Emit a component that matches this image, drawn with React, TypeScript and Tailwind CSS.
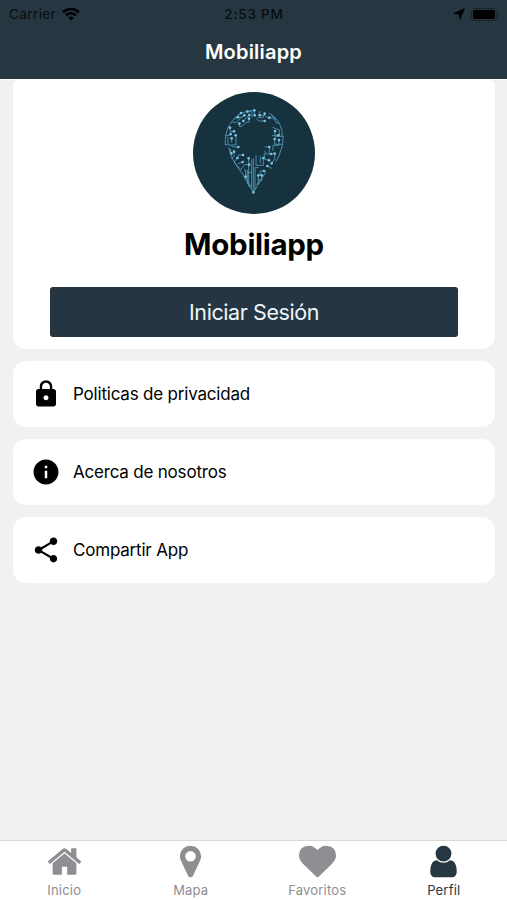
import { MdInfo, MdLock, MdShare } from 'react-icons/md'
import type { IconType } from 'react-icons'

const options: { label: string; icon: IconType }[] = [
  { label: 'Politicas de privacidad', icon: MdLock },
  { label: 'Acerca de nosotros', icon: MdInfo },
  { label: 'Compartir App', icon: MdShare },
]

const tabs = [
  {
    label: 'Inicio',
    path: 'M1472 992v480q0 26-19 45t-45 19h-384v-384h-256v384h-384q-26 0-45-19t-19-45v-480q0-1 .5-3t.5-3l575-474 575 474q1 2 1 6zm223-69l-62 74q-8 9-21 11h-3q-13 0-21-7l-692-577-692 577q-12 8-24 7-13-2-21-11l-62-74q-8-10-7-23.5t11-21.5l719-599q32-26 76-26t76 26l244 204v-195q0-14 9-23t23-9h192q14 0 23 9t9 23v408l219 182q10 8 11 21.5t-7 23.5z',
  },
  {
    label: 'Mapa',
    path: 'M1152 640q0-106-75-181t-181-75-181 75-75 181 75 181 181 75 181-75 75-181zm256 0q0 109-33 179l-364 774q-16 33-47.5 52t-67.5 19-67.5-19-46.5-52l-365-774q-33-70-33-179 0-212 150-362t362-150 362 150 150 362z',
  },
  {
    label: 'Favoritos',
    path: 'M896 1664q-26 0-44-18l-624-602q-10-8-27.5-26t-55.5-65.5-68-97.5-53.5-121-23.5-138q0-220 127-344t351-124q62 0 126.5 21.5t120 58 95.5 68.5 76 68q36-36 76-68t95.5-68.5 120-58 126.5-21.5q224 0 351 124t127 344q0 221-229 450l-623 600q-18 18-44 18z',
  },
  {
    label: 'Perfil',
    active: true,
    path: 'M1536 1399q0 109-62.5 187t-150.5 78h-854q-88 0-150.5-78t-62.5-187q0-85 8.5-160.5t31.5-152 58.5-131 94-89 134.5-34.5q131 128 313 128t313-128q76 0 134.5 34.5t94 89 58.5 131 31.5 152 8.5 160.5zm-256-887q0 159-112.5 271.5t-271.5 112.5-271.5-112.5-112.5-271.5 112.5-271.5 271.5-112.5 271.5 112.5 112.5 271.5z',
  },
]

// circuit nodes of the pin logo
const nodes = [
  [211, 76], [190, 80], [181, 91], [171, 84], [162, 97], [196, 90], [195, 101], [212, 91], [227, 91], [242, 86],
  [242, 108], [256, 98], [178, 108], [166, 116], [138, 128], [150, 139], [140, 147], [143, 160], [155, 151],
  [273, 138], [283, 151], [272, 162], [285, 165], [163, 186], [150, 200], [142, 205], [177, 210], [160, 219],
  [176, 231], [194, 220], [195, 239], [256, 186], [262, 207], [272, 206], [255, 226], [263, 235], [250, 243],
  [238, 219], [223, 271], [233, 271], [185, 275], [240, 258], [208, 322],
]

function Logo() {
  return (
    <svg viewBox="27 21 366 366" className="h-[122px] w-[122px]">
      <circle cx="210" cy="204" r="183" fill="#17323f" />
      <g fill="none" stroke="#4f93b3" strokeWidth="2.8">
        <path d="M137 119Q160 77 211 76M146 112h12l20-21M152 104l19-20M162 97h13l10-10M166 116v8h8l12-12h9V90M178 108l17-18M211 76v15M190 80h14v18M227 78v13M221 98h16l5-12M242 108h-18l-8-8M227 91h13l16 10M254 84q32 16 40 54M256 98l14 2 8 14h8M262 92l15 12" />
        <path d="M138 128v11h12M134 122q-11 24-11 57M123 151h17v-4M132 156v24h24v-29M143 160v12M123 179h7M273 138v16h10v-3M266 127l20 8v19h12M298 154q0 30-13 58l-9 18M272 162v16h22M285 165v16h-18v16M294 140v14M264 152h18" />
        <path d="M134 187q6 35 39 76M163 186h-14l-8-5M150 200v14l-8 6M142 205l-3-14M177 210h-14v9M160 219l-10 12 18 20M176 231l-14 5M194 220v15M195 239h-13l-13 16M256 186h-14M262 207h-16l-4-10M256 186v20M272 206v16l-9 13M255 226l-14-4v-18M250 243l15 8M238 219v22h-22v-30M229 214v20" />
        <path d="M174 263l34 60 38-63M208 322V220M203 310V223M213 315V248h11M194 239v66M185 275v-20h-5M190 255v42M201 263h-10M223 271v28M233 271v18M220 284h14M240 258h-11v13M217 300l10-12M181 276l20 28" />
      </g>
      <g fill="#7cc4e0">
        {nodes.map(([x, y]) => (
          <circle key={`${x}-${y}`} cx={x} cy={y} r="4" />
        ))}
      </g>
    </svg>
  )
}

function StatusBar() {
  return (
    <div className="grid h-7 grid-cols-3 items-center px-[9px] text-[13.5px] leading-none text-[#070d11]">
      <div className="flex items-center gap-[6px]">
        <span className="pt-px tracking-[0.4px]">Carrier</span>
        <svg viewBox="0 0 18 14" className="h-[14px] w-[18px]" fill="none" stroke="#000" strokeWidth="2.6">
          <path d="M1 5.2a11.5 11.5 0 0 1 16 0M4 8.4a7 7 0 0 1 10 0" />
          <path d="M9 13.6L6.2 10.8a4 4 0 0 1 5.6 0z" fill="#000" stroke="none" />
        </svg>
      </div>
      <span className="pl-px pt-px text-center font-medium tracking-[0.8px]">2:53 PM</span>
      <div className="flex items-center justify-end gap-[6px]">
        <svg viewBox="0 0 12 12" className="h-3 w-3">
          <path d="M11.6.6L7 11.8 5.9 6.4.4 5.4z" fill="#000" stroke="#000" strokeWidth=".4" />
        </svg>
        <svg viewBox="0 0 30 13" className="-mr-[3px] h-[13px] w-[30px]">
          <rect x=".5" y=".5" width="25" height="12" rx="3.5" fill="none" stroke="#17232b" />
          <rect x="2" y="2" width="22" height="9" rx="2" fill="#000" />
          <path d="M27 4.5q2 2 0 4z" fill="#17232b" />
        </svg>
      </div>
    </div>
  )
}

export default function App() {
  return (
    <div className="flex h-[900px] w-[507px] flex-col overflow-hidden bg-[#f1f1f1] font-['Inter','Liberation_Sans',sans-serif] text-black">
      <header className="h-[79px] shrink-0 bg-[#263741]">
        <StatusBar />
        <h1 className="pt-[9px] text-center text-[20px] font-semibold leading-[30px] tracking-[0.2px] text-white">
          Mobiliapp
        </h1>
      </header>

      <main className="flex flex-1 flex-col gap-3 border-t border-white pl-[13px] pr-[12px]">
        <section className="flex h-[269px] flex-col items-center rounded-t-[6px] rounded-b-[13px] bg-white pt-[11.5px]">
          <Logo />
          <h2 className="mt-[9.5px] text-[29.5px] font-bold leading-[42px] tracking-[-0.3px]">Mobiliapp</h2>
          <button className="mt-[22px] h-[50px] w-[408px] rounded-[3px] bg-[#253541] text-[21.5px] tracking-[-0.42px] text-[#eef5fa]">
            Iniciar Sesión
          </button>
        </section>

        {options.map(({ label, icon: Icon }) => (
          <button key={label} className="flex h-[66px] items-center gap-3 rounded-[13px] bg-white pl-[18px] text-left">
            <Icon className="h-[30px] w-[30px]" />
            <span className="pt-0.5 text-[17px] tracking-[-0.2px]">{label}</span>
          </button>
        ))}
      </main>

      <nav className="grid h-[60px] shrink-0 grid-cols-4 border-t border-[#d8d8d8] bg-white pl-px">
        {tabs.map(tab => (
          <button
            key={tab.label}
            className={`flex flex-col items-center pt-[2px] ${tab.active ? 'text-[#263741]' : 'text-[#8e8e93]'}`}
          >
            <svg viewBox="0 0 1792 1792" fill="currentColor" className="h-[37px] w-[37px]">
              <path d={tab.path} />
            </svg>
            <span className="mt-0.5 text-[13px] leading-4 tracking-[0.2px]">{tab.label}</span>
          </button>
        ))}
      </nav>
    </div>
  )
}
